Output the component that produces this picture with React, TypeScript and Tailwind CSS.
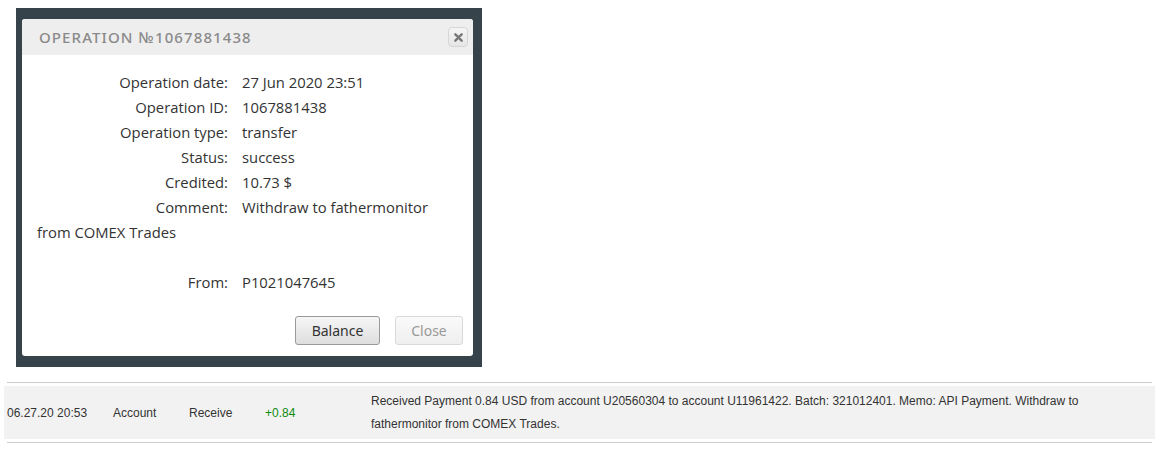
import React from "react";

const rows: [string, string][] = [
  ["Operation date:", "27 Jun 2020 23:51"],
  ["Operation ID:", "1067881438"],
  ["Operation type:", "transfer"],
  ["Status:", "success"],
  ["Credited:", "10.73 $"],
];

function Label({ children }: { children: React.ReactNode }) {
  return (
    <span className="inline-block w-[191px] mr-[14px] text-right">{children}</span>
  );
}

export default function App() {
  return (
    <div className="w-[1169px] h-[462px] bg-white overflow-hidden">
      <div className="pt-[8px] pl-[16px]">
        <div className="w-[466px] bg-[#36434b] pt-[11px] pl-[6px] pr-[9px] pb-[11px]">
          <div className="bg-white rounded-[3px] overflow-hidden">
            <div className="h-[36px] bg-[#eeeeee] flex items-center justify-between pl-[17px] pr-[5px]">
              <span
                className="text-[15px] font-medium tracking-[1.1px] text-[#8a8a8a]"
                style={{ fontFamily: '"Noto Sans", "DejaVu Sans", sans-serif' }}
              >
                OPERATION №1067881438
              </span>
              <div className="w-[20px] h-[20px] rounded-[4px] border border-[#d6d6d6] bg-gradient-to-b from-[#f5f5f5] to-[#e6e6e6] flex items-center justify-center">
                <svg width="9" height="9" viewBox="0 0 10 10">
                  <path d="M1.5 1.5 L8.5 8.5 M8.5 1.5 L1.5 8.5" stroke="#777" strokeWidth="2.6" strokeLinecap="round" />
                </svg>
              </div>
            </div>
            <div
              className="pt-[15px] px-[15px] text-[14.8px] leading-[25px] text-[#333]"
              style={{ fontFamily: '"Open Sans", "Noto Sans", sans-serif' }}
            >
              {rows.map(([l, v]) => (
                <div key={l}>
                  <Label>{l}</Label>
                  {v}
                </div>
              ))}
              <div>
                <Label>Comment:</Label>
                Withdraw to fathermonitor from COMEX Trades
              </div>
              <div>&nbsp;</div>
              <div>
                <Label>From:</Label>
                P1021047645
              </div>
            </div>
            <div
              className="flex justify-end gap-[15px] pt-[21px] pr-[10px] pb-[11px] text-[14px] font-normal"
              style={{ fontFamily: '"Noto Sans", "DejaVu Sans", sans-serif' }}
            >
              <button className="w-[85px] h-[29px] rounded-[3px] border border-[#9a9a9a] bg-gradient-to-b from-[#f6f6f6] to-[#dedede] text-[#333]">
                Balance
              </button>
              <button className="w-[68px] h-[29px] rounded-[3px] border border-[#d9d9d9] bg-gradient-to-b from-[#fafafa] to-[#efefef] text-[#999]">
                Close
              </button>
            </div>
          </div>
        </div>
      </div>

      <div
        className="mt-[15px] ml-[7px] w-[1145px] border-t border-b border-[#cccccc] py-[3px] text-[12px] text-[#333]"
        style={{ fontFamily: '"Liberation Sans", Arial, sans-serif' }}
      >
        <div className="-mx-[3px] bg-[#f2f2f2] flex items-center pl-[3px] pt-[4px] pb-[3px]">
          <div className="w-[106px]">06.27.20 20:53</div>
          <div className="w-[76px]">Account</div>
          <div className="w-[76px]">Receive</div>
          <div className="w-[106px] text-[#118a11]">+0.84</div>
          <div className="w-[740px] leading-[23px]">
            Received Payment 0.84 USD from account U20560304 to account U11961422. Batch: 321012401. Memo: API Payment. Withdraw to fathermonitor from COMEX Trades.
          </div>
        </div>
      </div>
    </div>
  );
}
